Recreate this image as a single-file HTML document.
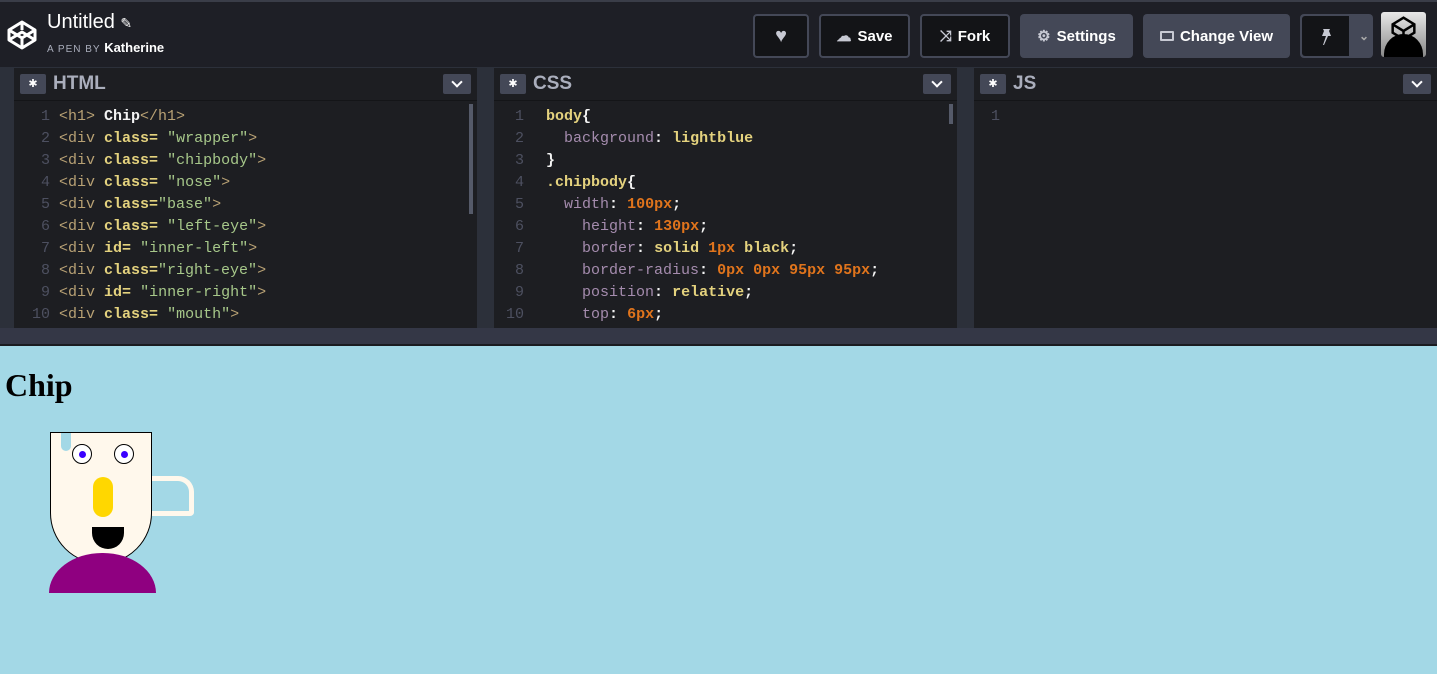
<!DOCTYPE html>
<html><head><style>
*{margin:0;padding:0;box-sizing:border-box}
body{width:1437px;height:674px;overflow:hidden;background:#a3d8e6;font-family:"Liberation Sans",sans-serif;position:relative}
#hdr{position:absolute;left:0;top:0;width:1437px;height:67px;background:#1e1f26;border-top:2px solid #3a3d48}
.btn{position:absolute;top:12px;height:44px;border-radius:4px;color:#fff;font-weight:bold;font-size:15px;display:flex;align-items:center;justify-content:center;gap:6px}
.ol{border:2px solid #444857;background:#131417}
.fl{background:#444857}
#work{position:absolute;left:0;top:67px;width:1437px;height:279px;background:#2c303a}
.panel{position:absolute;top:1px;height:261px;background:#1d1e22}
.ph{height:33px;border-bottom:1px solid #141518;position:relative}
.gear{position:absolute;left:6px;top:6px;width:26px;height:20px;background:#444857;border-radius:2px;color:#fff;font-size:11px;text-align:center;line-height:20px}
.pt{position:absolute;left:39px;top:5px;color:#aaaebc;font-weight:bold;font-size:19px}
.dd{position:absolute;right:6px;top:6px;width:28px;height:20px;background:#444857;border-radius:2px}
.dd:after{content:"";position:absolute;left:10px;top:4px;width:6px;height:6px;border-right:2px solid #fff;border-bottom:2px solid #fff;transform:rotate(45deg)}
.code{font-family:"Liberation Mono",monospace;font-size:15px;line-height:22px;position:absolute;top:38px;white-space:pre;font-weight:bold}
.ln{position:absolute;left:0;width:26px;text-align:right;color:#4d5060;font-weight:normal}
.t{color:#b8a174;font-weight:normal}.a{color:#e4d27e}.s{color:#a7c88a;font-weight:normal}.w{color:#f3f3f3}
.p{color:#a58cae;font-weight:normal}.n{color:#e0741c}.v{color:#e4d27e}
#bar{position:absolute;left:0;top:328px;width:1437px;height:18px;background:#343746;border-bottom:2px solid #1a1b20}
</style></head><body>
<div id="hdr">
<svg style="position:absolute;left:7px;top:18px" width="30" height="30" viewBox="0 0 30 30" fill="none" stroke="#fff" stroke-width="3" stroke-linejoin="round"><path d="M15 2 L28 10 L28 20 L15 28 L2 20 L2 10 Z M2 10 L15 18 L28 10 M15 2 L15 10 M2 20 L15 12 L28 20 M15 28 L15 18"/></svg>
<div style="position:absolute;left:47px;top:9px;color:#fff;font-size:20px">Untitled <span style="font-size:14px">✎</span></div>
<div style="position:absolute;left:47px;top:38px;color:#aaaebc;font-size:10px;letter-spacing:1px">A PEN BY <span style="color:#fff;font-weight:bold;font-size:13px;letter-spacing:0">Katherine</span></div>
<div class="btn ol" style="left:753px;width:56px"><span style="color:#c7c9d3;font-size:20px">♥</span></div>
<div class="btn ol" style="left:819px;width:91px"><span style="color:#c7c9d3">☁</span>Save</div>
<div class="btn ol" style="left:920px;width:90px"><span style="color:#c7c9d3">⤨</span>Fork</div>
<div class="btn fl" style="left:1020px;width:113px"><span style="color:#c7c9d3">⚙</span>Settings</div>
<div class="btn fl" style="left:1143px;width:147px"><span style="display:inline-block;width:14px;height:10px;border:2px solid #c7c9d3;border-radius:1px"></span>Change View</div>
<div class="btn fl" style="left:1300px;width:73px;justify-content:flex-start"><div style="width:47px;height:40px;background:#131417;border-radius:3px 0 0 3px;margin-left:2px;position:relative"><svg style="position:absolute;left:16px;top:12px" width="16" height="18" viewBox="0 0 16 18" fill="#c7c9d3"><path d="M5 1h7l-1 2 2 5H4l2-5z M8 8l-3 9 1 0 4-9z"/></svg></div><span style="color:#aaa;font-size:12px;margin-left:4px">⌄</span></div>
<div style="position:absolute;left:1381px;top:10px;width:45px;height:45px;background:linear-gradient(#e8e8e8,#888);border-radius:3px;overflow:hidden"><div style="position:absolute;left:3px;top:22px;width:39px;height:40px;background:#000;border-radius:50% 50% 0 0"></div><svg style="position:absolute;left:10px;top:4px" width="25" height="25" viewBox="0 0 30 30" fill="none" stroke="#000" stroke-width="3"><path d="M15 2 L28 10 L28 20 L15 28 L2 20 L2 10 Z M2 10 L15 18 L28 10 M15 28 L15 18"/></svg></div>
</div>
<div id="work">
<div class="panel" style="left:14px;width:463px">
<div class="ph"><div class="gear">✱</div><div class="pt">HTML</div><div class="dd"></div></div>
<div style="position:absolute;right:4px;top:36px;width:4px;height:110px;background:#555a69"></div>
<div class="code" style="left:10px"><div class="ln">1<br>2<br>3<br>4<br>5<br>6<br>7<br>8<br>9<br>10</div><div style="position:absolute;left:35px"><span class="t">&lt;h1&gt;</span> <span class="w">Chip</span><span class="t">&lt;/h1&gt;</span>
<span class="t">&lt;div</span> <span class="a">class=</span> <span class="s">"wrapper"</span><span class="t">&gt;</span>
<span class="t">&lt;div</span> <span class="a">class=</span> <span class="s">"chipbody"</span><span class="t">&gt;</span>
<span class="t">&lt;div</span> <span class="a">class=</span> <span class="s">"nose"</span><span class="t">&gt;</span>
<span class="t">&lt;div</span> <span class="a">class=</span><span class="s">"base"</span><span class="t">&gt;</span>
<span class="t">&lt;div</span> <span class="a">class=</span> <span class="s">"left-eye"</span><span class="t">&gt;</span>
<span class="t">&lt;div</span> <span class="a">id=</span> <span class="s">"inner-left"</span><span class="t">&gt;</span>
<span class="t">&lt;div</span> <span class="a">class=</span><span class="s">"right-eye"</span><span class="t">&gt;</span>
<span class="t">&lt;div</span> <span class="a">id=</span> <span class="s">"inner-right"</span><span class="t">&gt;</span>
<span class="t">&lt;div</span> <span class="a">class=</span> <span class="s">"mouth"</span><span class="t">&gt;</span></div></div>
</div>
<div class="panel" style="left:494px;width:463px">
<div class="ph"><div class="gear">✱</div><div class="pt">CSS</div><div class="dd"></div></div>
<div style="position:absolute;right:4px;top:36px;width:4px;height:20px;background:#555a69"></div>
<div class="code" style="left:4px"><div class="ln">1<br>2<br>3<br>4<br>5<br>6<br>7<br>8<br>9<br>10</div><div style="position:absolute;left:48px"><span class="v">body</span><span class="w">{</span>
  <span class="p">background</span><span class="w">:</span> <span class="v">lightblue</span>
<span class="w">}</span>
<span class="v">.chipbody</span><span class="w">{</span>
  <span class="p">width</span><span class="w">:</span> <span class="n">100px</span><span class="w">;</span>
    <span class="p">height</span><span class="w">:</span> <span class="n">130px</span><span class="w">;</span>
    <span class="p">border</span><span class="w">:</span> <span class="v">solid</span> <span class="n">1px</span> <span class="v">black</span><span class="w">;</span>
    <span class="p">border-radius</span><span class="w">:</span> <span class="n">0px 0px 95px 95px</span><span class="w">;</span>
    <span class="p">position</span><span class="w">:</span> <span class="v">relative</span><span class="w">;</span>
    <span class="p">top</span><span class="w">:</span> <span class="n">6px</span><span class="w">;</span></div></div>
</div>
<div class="panel" style="left:974px;width:463px">
<div class="ph"><div class="gear">✱</div><div class="pt">JS</div><div class="dd"></div></div>
<div class="code" style="left:0"><div class="ln">1</div></div>
</div>
</div>
<div id="bar"></div>
<div style="position:absolute;left:5px;top:367px;font-family:'Liberation Serif',serif;font-weight:bold;font-size:32px">Chip</div>
<div style="position:absolute;left:152px;top:476px;width:42px;height:40px;border:5px solid #fff8ec;border-left:none;border-radius:0 16px 4px 0"></div>
<div style="position:absolute;left:50px;top:432px;width:102px;height:132px;background:#fff8ec;border:1px solid #000;border-radius:0 0 95px 95px"></div>
<div style="position:absolute;left:61px;top:433px;width:10px;height:18px;background:#a3d8e6;border-radius:0 0 5px 5px"></div>
<div style="position:absolute;left:72px;top:444px;width:20px;height:20px;border:1px solid #000;border-radius:50%;background:#fff"></div>
<div style="position:absolute;left:79px;top:451px;width:7px;height:7px;border-radius:50%;background:#3a00ff"></div>
<div style="position:absolute;left:114px;top:444px;width:20px;height:20px;border:1px solid #000;border-radius:50%;background:#fff"></div>
<div style="position:absolute;left:121px;top:451px;width:7px;height:7px;border-radius:50%;background:#3a00ff"></div>
<div style="position:absolute;left:93px;top:477px;width:20px;height:40px;border-radius:10px;background:#ffd700"></div>
<div style="position:absolute;left:92px;top:527px;width:32px;height:22px;border-radius:0 0 16px 16px;background:#000"></div>
<div style="position:absolute;left:49px;top:553px;width:107px;height:40px;border-radius:53px 53px 0 0/40px 40px 0 0;background:#8f0080"></div>
</body></html>
